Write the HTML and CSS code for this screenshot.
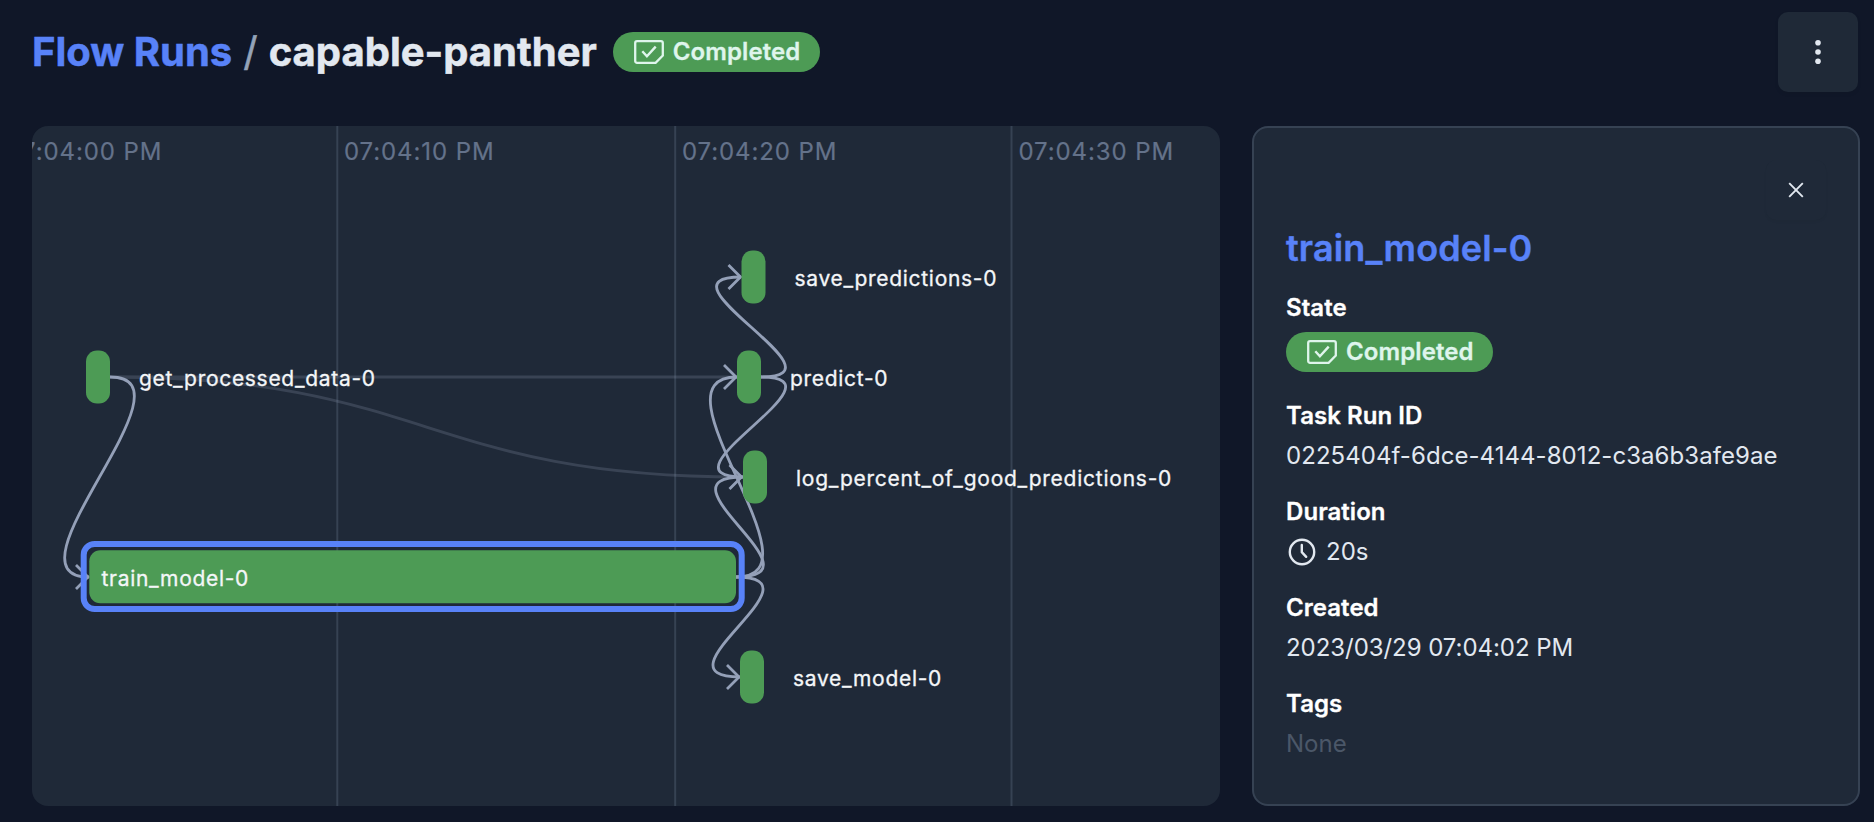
FILE: index.html
```html
<!DOCTYPE html>
<html lang="en">
<head>
<meta charset="utf-8">
<title>capable-panther</title>
<link rel="stylesheet" href="styles.css">
</head>
<body>
<svg width="0" height="0" class="defs" aria-hidden="true">
  <symbol id="state-completed" viewBox="0 0 30 24">
    <path d="M3 1.200h24a1.800 1.800 0 0 1 1.800 1.800v12.600l-7.200 7.200H3a1.800 1.800 0 0 1-1.800-1.800V3a1.800 1.800 0 0 1 1.800-1.800z" fill="none" stroke="currentColor" stroke-width="2.300"/>
    <path d="M8.300 11.200l4.600 5 8.800-9.600" fill="none" stroke="currentColor" stroke-width="2.400"/>
  </symbol>
</svg>
<header class="page-header">
  <h1 class="crumbs"><a class="crumb-link">Flow Runs</a><span class="crumb-sep">/</span><span class="crumb-current">capable-panther</span></h1>
  <span class="badge"><svg class="badge-icon"><use href="#state-completed"/></svg><span class="badge-text">Completed</span></span>
  <button class="menu-button" aria-label="Menu">
    <svg width="8" height="26" viewBox="0 0 8 26" fill="currentColor"><circle cx="4" cy="3.700" r="2.800"/><circle cx="4" cy="13" r="2.800"/><circle cx="4" cy="22.300" r="2.800"/></svg>
  </button>
</header>
<main class="content">
  <section class="timeline">
    <svg class="graph" viewBox="32 126 1188 680">
      <g class="grid"><path d="M337.300 126v680M675.200 126v680M1011.500 126v680"/></g>
      <g class="axis">
        <text x="6.500" y="160">07:04:00 PM</text>
        <text x="344" y="160">07:04:10 PM</text>
        <text x="682" y="160">07:04:20 PM</text>
        <text x="1018.500" y="160">07:04:30 PM</text>
      </g>
      <g class="edges faint">
        <path d="M110 377H736"/>
        <path d="M110 377C426 377 427 477 742 477"/>
      </g>
      <g class="edges">
        <path d="M110 377C202 377-3 577 89 577"/>
        <path d="M761 377C853 377 649 277 741 277"/>
        <path d="M761 377C853 377 651 477 743 477"/>
        <path d="M736 577C828 577 645 377 737 377"/>
        <path d="M736 577C828 577 651 477 743 477"/>
        <path d="M736 577C828 577 648 677 740 677"/>
        <path d="M76 565l12 12-12 12M728.500 265l12 12-12 12M724 365l12 12-12 12M729.500 465l12 12-12 12M727 665l12 12-12 12"/>
      </g>
      <g class="nodes">
        <rect x="86" y="350.500" width="24" height="53" rx="11"/>
        <rect x="741.500" y="250.500" width="24" height="53" rx="11"/>
        <rect x="737" y="350.500" width="24" height="53" rx="11"/>
        <rect x="743" y="450.500" width="24" height="53" rx="11"/>
        <rect x="740" y="650.500" width="24" height="53" rx="11"/>
        <rect x="89.300" y="550.300" width="646.700" height="53" rx="11"/>
      </g>
      <rect class="selection" x="83.700" y="544" width="658" height="65" rx="11"/>
      <g class="labels">
        <text x="139" y="386">get_processed_data-0</text>
        <text x="794.500" y="286">save_predictions-0</text>
        <text x="790" y="386">predict-0</text>
        <text class="wide" x="796" y="486">log_percent_of_good_predictions-0</text>
        <text x="101.500" y="586">train_model-0</text>
        <text x="793" y="686">save_model-0</text>
      </g>
    </svg>
  </section>
  <aside class="panel">
    <button class="close-button" aria-label="Close">
      <svg width="16" height="16" viewBox="0 0 16 16"><path d="M1.200 1.200l13.600 13.600M14.800 1.200l-13.600 13.600" fill="none" stroke="currentColor" stroke-width="1.900"/></svg>
    </button>
    <h2 class="panel-title">train_model-0</h2>
    <dl class="fields">
      <div><dt>State</dt><dd class="state"><span class="badge"><svg class="badge-icon"><use href="#state-completed"/></svg><span class="badge-text">Completed</span></span></dd></div>
      <div><dt>Task Run ID</dt><dd class="run-id">0225404f-6dce-4144-8012-c3a6b3afe9ae</dd></div>
      <div><dt>Duration</dt><dd class="duration"><svg width="32" height="32" viewBox="0 0 32 32" fill="none" stroke="currentColor" stroke-width="2.400"><circle cx="16" cy="16" r="12.200"/><path d="M15.800 9v7.200l4.400 4.600" stroke-linecap="round" stroke-linejoin="round"/></svg><span>20s</span></dd></div>
      <div><dt>Created</dt><dd class="created">2023/03/29 07:04:02 PM</dd></div>
      <div><dt>Tags</dt><dd class="empty">None</dd></div>
    </dl>
  </aside>
</main>
</body>
</html>
```

FILE: styles.css
```css
* { box-sizing: border-box; }
body {
  margin: 0;
  width: 1874px;
  height: 822px;
  overflow: hidden;
  padding: 12px 14px 16px 32px;
  display: flex;
  flex-direction: column;
  gap: 34px;
  background: #101728;
  color: #e2e8f0;
  font-family: Inter, "Liberation Sans", sans-serif;
  font-size: 24px;
}
.defs { position: absolute; }
button {
  border: 0;
  padding: 0;
  background: #1f2937;
  color: #e2e8f0;
  display: flex;
  align-items: center;
  justify-content: center;
  box-shadow: 0 2px 4px rgba(0, 0, 0, .06);
}
.page-header {
  height: 80px;
  flex: none;
  display: flex;
  align-items: center;
  padding-right: 2px;
}
.crumbs {
  margin: 0 16px 0 0;
  display: flex;
  font-size: 40px;
  line-height: 56px;
  font-weight: 700;
  white-space: nowrap;
  -webkit-text-stroke: .5px currentColor;
}
.crumb-link { color: #5882f8; }
.crumb-sep { color: #94a3b8; font-weight: 400; margin: 0 11px; }
.badge {
  display: inline-flex;
  align-items: center;
  gap: 9px;
  width: 207px;
  height: 40px;
  padding-left: 21px;
  border-radius: 20px;
  background: #4d9b55;
  color: #dff5ec;
  font-weight: 600;
  letter-spacing: .1px;
  -webkit-text-stroke: .3px currentColor;
}
.badge-icon { width: 30px; height: 24px; flex: none; }
.badge-text { line-height: 40px; }
.menu-button { width: 80px; height: 80px; margin-left: auto; border-radius: 10px; }
.content { flex: 1; display: flex; gap: 32px; min-height: 0; }
.timeline {
  width: 1188px;
  border-radius: 16px;
  background: #1f2938;
  overflow: hidden;
}
.graph { display: block; width: 1188px; height: 680px; }
.grid { stroke: #364253; stroke-width: 2; }
.axis { fill: #64728a; font-size: 24px; letter-spacing: .9px; stroke: #64728a; stroke-width: .2; }
.edges { fill: none; stroke: #94a0b8; stroke-width: 2.800; }
.faint { opacity: .22; }
.nodes { fill: #4d9b55; }
.selection { fill: none; stroke: #5882f8; stroke-width: 6; }
.labels { fill: #f4f6f8; font-size: 21px; letter-spacing: .7px; stroke: #f4f6f8; stroke-width: .3; }
.labels .wide { letter-spacing: .76px; }
.panel {
  flex: 1;
  display: flex;
  flex-direction: column;
  padding: 32px;
  border: 2px solid #364253;
  border-radius: 16px;
  background: #1f2938;
}
.close-button {
  width: 60px;
  height: 60px;
  align-self: flex-end;
  flex: none;
  border-radius: 10px;
  background: #1f2938;
  box-shadow: 0 2px 3px rgba(0, 0, 0, .03);
}
.panel-title {
  margin: 4px 0 16px;
  line-height: 48px;
  font-size: 36px;
  font-weight: 600;
  letter-spacing: .12px;
  -webkit-text-stroke: .4px currentColor;
  color: #5882f8;
}
.fields { margin: 0; display: flex; flex-direction: column; gap: 16px; }
dt { font-weight: 600; line-height: 40px; color: #fff; letter-spacing: .05px; -webkit-text-stroke: .3px currentColor; }
dd { margin: 0; line-height: 40px; height: 40px; white-space: nowrap; }
.state { height: 52px; padding-top: 4px; display: flex; align-items: flex-start; }
.run-id { letter-spacing: .06px; }
.created { letter-spacing: -.05px; }
.duration { display: flex; align-items: center; gap: 8px; }
.empty { color: #4b5768; }
```
